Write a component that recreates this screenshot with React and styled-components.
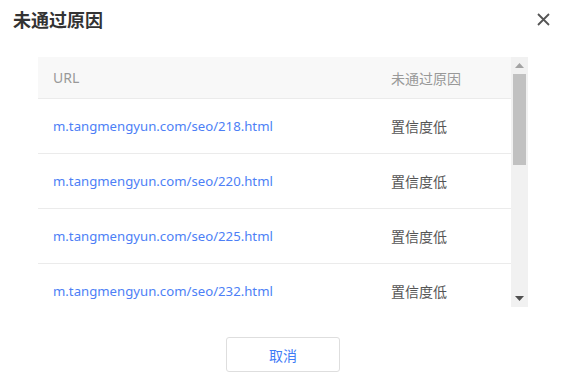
import React from 'react';
import styled, {createGlobalStyle} from 'styled-components';

const GlobalStyle = createGlobalStyle`
  html, body {
    margin: 0;
    padding: 0;
    background: #fff;
  }
  body {
    font-family: "Noto Sans", "Noto Sans CJK SC", sans-serif;
    color: #333;
  }
`;

const Dialog = styled.div`
  width: 572px;
  height: 378px;
  background: #fff;
  display: flex;
  flex-direction: column;
`;

const TitleBar = styled.div`
  height: 38px;
  display: flex;
  align-items: center;
  justify-content: space-between;
  padding: 0 22px 0 13px;
`;

const Title = styled.h3`
  margin: 0;
  font-size: 18px;
  font-weight: 700;
  color: #333;
  font-family: "Noto Sans CJK SC", sans-serif;
`;

const CloseButton = styled.button`
  width: 14px;
  height: 14px;
  padding: 0;
  border: none;
  background: none;
  cursor: pointer;
  display: flex;
  align-items: center;
  justify-content: center;
`;

const Body = styled.div`
  margin: 19px 44px 0 38px;
  display: flex;
  flex-direction: column;
  align-items: center;
`;

// 표 + 스크롤바를 나란히 두는 영역
const ScrollBox = styled.div`
  width: 100%;
  height: 250px;
  display: flex;
`;

const Viewport = styled.div`
  flex: 1;
  overflow: hidden;
`;

const Scrollbar = styled.div`
  width: 17px;
  background: #f1f1f1;
  display: flex;
  flex-direction: column;
  align-items: center;
`;

const ArrowButton = styled.div`
  height: 17px;
  width: 17px;
  display: flex;
  align-items: center;
  justify-content: center;
`;

const Track = styled.div`
  flex: 1;
  width: 100%;
  display: flex;
  justify-content: center;
`;

const Thumb = styled.div`
  width: 13px;
  height: ${p => p.$h}px;
  background: #c1c1c1;
`;

const Table = styled.table`
  width: 100%;
  border-collapse: collapse;
  font-size: 14px;
`;

const HeadCell = styled.th`
  height: 41px;
  padding: 0 15px;
  background: #f8f8f8;
  border-bottom: 1px solid #ebebeb;
  color: #999;
  font-weight: 400;
  font-size: 14px;
  text-align: left;
  width: ${p => p.$w || 'auto'};
`;

const Cell = styled.td`
  height: 54px;
  padding: 0 15px;
  border-bottom: 1px solid #ebebeb;
  color: ${p => (p.$link ? '#4d7ff6' : '#555')};
  font-size: ${p => (p.$link ? '13.2px' : '14px')};
  white-space: nowrap;
`;

const UrlLink = styled.a`
  color: inherit;
  text-decoration: none;
`;

const Footer = styled.div`
  margin-top: 30px;
`;

const CancelButton = styled.button`
  width: 114px;
  height: 35px;
  border: 1px solid #dedede;
  border-radius: 3px;
  background: #fff;
  color: #3f7cf6;
  font-size: 14px;
  font-family: "Noto Sans CJK SC", sans-serif;
  cursor: pointer;
`;

const rows = [218, 220, 225, 232, 236, 241, 245, 250, 256, 260].map(n => ({
  url: `m.tangmengyun.com/seo/${n}.html`,
  reason: '置信度低',
}));

const App = () => {
  return (
    <>
      <GlobalStyle />
      <Dialog>
        <TitleBar>
          <Title>未通过原因</Title>
          <CloseButton aria-label="close">
            <svg width="13" height="13" viewBox="0 0 13 13">
              <path d="M1 1L12 12M12 1L1 12" stroke="#555" strokeWidth="1.8" />
            </svg>
          </CloseButton>
        </TitleBar>
        <Body>
          <ScrollBox>
            <Viewport>
              <Table>
                <thead>
                  <tr>
                    <HeadCell>URL</HeadCell>
                    <HeadCell $w="105px">未通过原因</HeadCell>
                  </tr>
                </thead>
                <tbody>
                  {rows.map(r => (
                    <tr key={r.url}>
                      <Cell $link>
                        <UrlLink href="#">{r.url}</UrlLink>
                      </Cell>
                      <Cell>{r.reason}</Cell>
                    </tr>
                  ))}
                </tbody>
              </Table>
            </Viewport>
            <Scrollbar>
              <ArrowButton>
                <svg width="9" height="5" viewBox="0 0 9 5">
                  <polygon points="0,5 9,5 4.5,0" fill="#a3a3a3" />
                </svg>
              </ArrowButton>
              <Track>
                <Thumb $h={91} />
              </Track>
              <ArrowButton>
                <svg width="9" height="5" viewBox="0 0 9 5">
                  <polygon points="0,0 9,0 4.5,5" fill="#505050" />
                </svg>
              </ArrowButton>
            </Scrollbar>
          </ScrollBox>
          <Footer>
            <CancelButton>取消</CancelButton>
          </Footer>
        </Body>
      </Dialog>
    </>
  );
};

export default App;
